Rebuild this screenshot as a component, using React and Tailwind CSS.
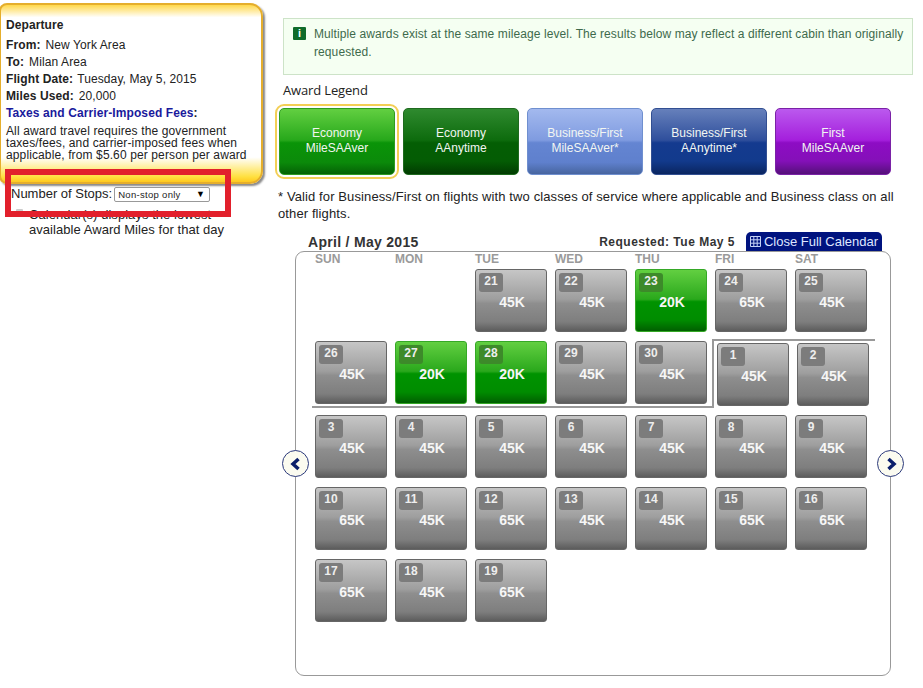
import { useState } from 'react'

const arial = { fontFamily: '"Liberation Sans", Arial, sans-serif' }

const legend = [
  { top: 'Economy', bottom: 'MileSAAver', tone: 'border-[#2f9a22] bg-[linear-gradient(#62cf41_0%,#27a81b_48%,#0a9408_52%,#0b8a0a_82%,#056205_100%)]', selected: true },
  { top: 'Economy', bottom: 'AAnytime', tone: 'border-[#1f6a1f] bg-[linear-gradient(#2f8a2f_0%,#0d6b0d_48%,#045e04_52%,#045c04_80%,#013c01_100%)]' },
  { top: 'Business/First', bottom: 'MileSAAver*', tone: 'border-[#6f8fcf] bg-[linear-gradient(#a3b9ee_0%,#7f9be0_48%,#6485d2_52%,#5f80cd_82%,#47659f_100%)]' },
  { top: 'Business/First', bottom: 'AAnytime*', tone: 'border-[#324f92] bg-[linear-gradient(#6680bb_0%,#2f4f9c_48%,#143a8f_52%,#123a8c_80%,#0a2560_100%)]' },
  { top: 'First', bottom: 'MileSAAver', tone: 'border-[#7a22a6] bg-[linear-gradient(#bb59ee_0%,#a41fdc_48%,#8d0cc4_52%,#8410b8_80%,#55107a_100%)]' },
]

const days = ['SUN', 'MON', 'TUE', 'WED', 'THU', 'FRI', 'SAT']

function DayCell({ day, miles, green }) {
  return (
    <div className={`w-[72px] h-[63px] shrink-0 rounded-[3px] border p-[3px] ${green ? 'border-[#35a826] bg-[linear-gradient(#62cf41_0%,#2aa81c_48%,#009300_52%,#008c00_82%,#005f00_100%)]' : 'border-[#666] bg-[linear-gradient(#c6c6c6_0%,#9e9e9e_48%,#8e8e8e_55%,#7e7e7e_85%,#5c5c5c_100%)]'}`}>
      <div className={`w-[24px] h-[19px] rounded-[3px] text-center text-[12px] font-bold leading-[17px] text-[#eee] ${green ? 'bg-[#3d8a2a]' : 'bg-[#7c7c7c]'}`}>{day}</div>
      <div className="pl-[2px] text-center text-[14px] font-bold leading-[20px] text-[#f6f6f6]">{miles}</div>
    </div>
  )
}

function Row({ cells, className = '' }) {
  return (
    <div className={`flex gap-2 ${className}`}>
      {cells.map(([day, miles, green]) => <DayCell key={day} day={day} miles={miles} green={green} />)}
    </div>
  )
}

function NavButton({ dir, className }) {
  return (
    <button className={`absolute top-[198px] w-[27px] h-[27px] rounded-full border border-[#2c3a7c] bg-[#fbfbf0] flex items-center justify-center ${className}`}>
      <svg width="14" height="14" viewBox="0 0 14 14">
        <path d={dir === 'left' ? 'M9.5 2 L4 7 L9.5 12' : 'M4.5 2 L10 7 L4.5 12'} fill="none" stroke="#0b1f6b" strokeWidth="3.5" />
      </svg>
    </button>
  )
}

export default function App() {
  const [stops, setStops] = useState('Non-stop only')

  return (
    <div style={arial} className="relative flex w-[923px] h-[688px] overflow-hidden bg-white text-[#222]">
      {/* Left column */}
      <aside className="w-[275px] shrink-0 pt-[3px]">
        <div className="w-[264px] h-[181px] -ml-[1px] rounded-r-[13px] rounded-l-[8px] border-2 border-[#e5ae2c] shadow-[2px_2px_2px_#8a8a8a] bg-[linear-gradient(#ffd84a_0%,#fff_7%,#fff_86%,#ffe040_97%,#ffc91f_100%)] pl-[5px] pt-[12px] text-[12px] tracking-[0.1px]">
          <p className="font-bold leading-[17px]">Departure</p>
          <div className="mt-[3px] leading-[17px]">
            <p><b>From:</b><span className="ml-[5px]">New York Area</span></p>
            <p><b>To:</b><span className="ml-[5px]">Milan Area</span></p>
            <p><b>Flight Date:</b><span className="ml-[4px] tracking-[0.1px]">Tuesday, May 5, 2015</span></p>
            <p><b>Miles Used:</b><span className="ml-[5px]">20,000</span></p>
            <p className="font-bold"><span className="text-[#1a1a9c]">Taxes and Carrier-Imposed Fees</span>:</p>
          </div>
          <p className="mt-[3px] leading-[12px] tracking-[0.12px]">All award travel requires the government taxes/fees, and carrier-imposed fees when applicable, from $5.60 per person per award</p>
        </div>
        <div className="flex items-center pl-[11px] mt-[2px] h-[16px] text-[13px]">
          <span>Number of Stops:</span>
          <div className="relative ml-[2px] w-[96px] h-[15px] border border-[#999] rounded-[2px] bg-white text-[9.5px] leading-[13px] pl-[3px] tracking-[0.3px]">
            {stops}
            <span className="absolute right-[4px] top-0 text-[9px] text-black">▼</span>
          </div>
        </div>
        <div className="flex mt-[5px] pl-[16px] text-[13px] leading-[15px] tracking-[0.05px]">
          <span className="w-[7px] h-[5px] mt-[2px] mr-[6px] rounded-[1px] bg-[#ccc] shrink-0"></span>
          <p className="w-[205px]">Calendar(s) displays the lowest available Award Miles for that day</p>
        </div>
      </aside>

      {/* Right column */}
      <main className="flex-1 pt-[18px]">
        <div className="ml-[8px] w-[630px] h-[57px] border border-[#cde3c8] bg-[#f5fff2] flex pt-[6px] pl-[9px] pr-[6px]">
          <span className="mt-[2px] w-[13px] h-[13px] shrink-0 rounded-[1px] bg-[#0f6b2a] text-white text-[11px] font-bold leading-[13px] text-center">i</span>
          <p className="ml-[8px] text-[12px] leading-[18px] tracking-[0.09px] text-[#3e6a4c]">Multiple awards exist at the same mileage level. The results below may reflect a different cabin than originally requested.</p>
        </div>

        <h2 style={{ fontFamily: '"Open Sans", sans-serif' }} className="ml-[8px] mt-[6px] text-[13px] leading-[18px] tracking-[-0.15px] text-[#222]">Award Legend</h2>

        <div className="flex gap-2 ml-[4px] mt-[9px]">
          {legend.map((item) => (
            <div key={item.top + item.bottom} className={`w-[116px] h-[67px] shrink-0 rounded-[5px] border text-center text-[12px] leading-[15px] text-[#f2f6f2] pt-[17px] ${item.tone} ${item.selected ? 'outline-2 outline-offset-[2px] outline-[#f3cf55]' : ''}`}>
              <div>{item.top}</div>
              <div>{item.bottom}</div>
            </div>
          ))}
        </div>

        <p className="ml-[3px] mt-[13px] w-[630px] text-[13px] leading-[17px] tracking-[0.11px] text-[#222]">* Valid for Business/First on flights with two classes of service where applicable and Business class on all other flights.</p>

        {/* Calendar */}
        <div className="ml-[20px] mt-[10px] w-[596px]">
          <div className="flex items-end h-[19px] pl-[13px] pr-[9px] text-[#333]">
            <span className="text-[14px] font-bold leading-[18px] tracking-[0.3px]">April / May 2015</span>
            <span className="ml-auto text-[12px] font-bold leading-[18px] tracking-[0.5px]">Requested: Tue May 5</span>
            <button className="ml-[11px] w-[136px] h-[19px] rounded-t-[5px] bg-[#00137f] text-[#dfe6ff] text-[13px] leading-[18px] flex items-center justify-center gap-[3px]">
              <svg width="11" height="11" viewBox="0 0 11 11" fill="none" stroke="#c5d2f5" strokeWidth="1">
                <path d="M.5.5h10v10H.5zM3.8.5v10M7.2.5v10M.5 3.8h10M.5 7.2h10" />
              </svg>
              Close Full Calendar
            </button>
          </div>

          <div className="relative h-[425px] rounded-[9px] border border-[#999] pl-[19px]">
            <div className="flex h-[14px] items-center">
              {days.map((d) => (
                <span key={d} className="w-[80px] text-[12px] font-bold text-[#9a9a9a]">{d}</span>
              ))}
            </div>
            <Row className="ml-[160px] mt-[3px]" cells={[[21, '45K'], [22, '45K'], [23, '20K', true], [24, '65K'], [25, '45K']]} />

            {/* April / May divider runs through this row */}
            <div className="flex -ml-[3px] mt-[7px]">
              <div className="w-[402px] h-[69px] pl-[3px] pt-[2px] border-b-[2px] border-r-[2px] border-[#999]">
                <Row cells={[[26, '45K'], [27, '20K', true], [28, '20K', true], [29, '45K'], [30, '45K']]} />
              </div>
              <div className="w-[162px] h-[69px] pl-[4px] pt-[2px] border-t-[2px] border-[#999] -ml-[1px]">
                <Row cells={[[1, '45K'], [2, '45K']]} />
              </div>
            </div>

            <Row className="mt-[7px]" cells={[[3, '45K'], [4, '45K'], [5, '45K'], [6, '45K'], [7, '45K'], [8, '45K'], [9, '45K']]} />
            <Row className="mt-[9px]" cells={[[10, '65K'], [11, '45K'], [12, '65K'], [13, '45K'], [14, '45K'], [15, '65K'], [16, '65K']]} />
            <Row className="mt-[9px]" cells={[[17, '65K'], [18, '45K'], [19, '65K']]} />

            <NavButton dir="left" className="-left-[14px]" />
            <NavButton dir="right" className="-right-[14px]" />
          </div>
        </div>
      </main>

      {/* Red annotation drawn over the screenshot */}
      <div className="absolute left-[5px] top-[169px] w-[226px] h-[48px] border-[6px] border-[#e2202c] pointer-events-none"></div>
    </div>
  )
}
